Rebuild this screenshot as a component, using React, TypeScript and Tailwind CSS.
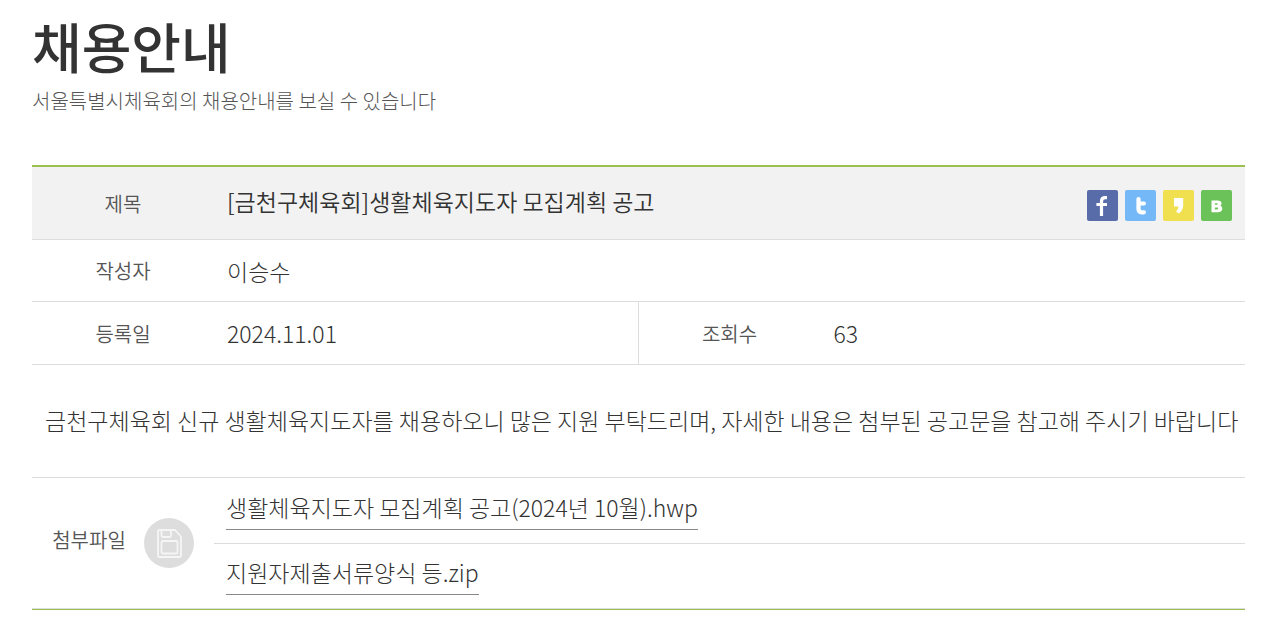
import type { ReactNode } from 'react';

const demiLight = "font-['Noto_Sans_CJK_KR_DemiLight','Noto_Sans_CJK_KR',sans-serif]";

const files = ['생활체육지도자 모집계획 공고(2024년 10월).hwp', '지원자제출서류양식 등.zip'];

const shares: { name: string; className: string; icon: ReactNode }[] = [
  {
    name: '페이스북',
    className: 'bg-[#576ca8]',
    icon: <path d="M20 7.600h-1.800c-2.600 0-3.700 1.400-3.700 3.800v14.700M9.400 14.500h10.600" fill="none" stroke="#fff" strokeWidth="3.200" />,
  },
  {
    name: '트위터',
    className: 'bg-[#74b8f7]',
    icon: (
      <path d="M13.500 9v9.800c0 2.600 1.400 3.500 3.400 3.500h2M13.500 13.500h5.400" fill="none" stroke="#fff" strokeWidth="4.200" strokeLinecap="round" />
    ),
  },
  {
    name: '카카오스토리',
    className: 'bg-[#f0df4e]',
    icon: <path d="M11 8h9.200v7.200c0 3.600-1.800 6.400-4.400 8.200l-2.800-1.900c1.500-1.500 2.300-3 2.500-5H11z" fill="#fff" />,
  },
  {
    name: '블로그',
    className: 'bg-[#6ac259]',
    icon: (
      <path
        fillRule="evenodd"
        d="M10.500 10.400h6c2.700 0 4 1.200 4 3.100 0 1.100-.5 1.900-1.300 2.300 1.300.5 2.100 1.500 2.100 2.900 0 2.200-1.700 3.600-4.400 3.600h-6.400zM13.900 13.200v1.600h1.900c1.300 0 1.300-1.600 0-1.600zM13.900 17.500v1.900h2.200c1.500 0 1.500-1.900 0-1.900z"
        fill="#fff"
      />
    ),
  },
];

function Label({ children }: { children: ReactNode }) {
  return (
    <th scope="row" className={`border-b border-[#ddd] text-xl font-normal text-[#555] ${demiLight}`}>
      {children}
    </th>
  );
}

export default function App() {
  return (
    <main className="bg-white pt-2.5 pr-[35px] pb-4 pl-8 font-['Noto_Sans_CJK_KR',sans-serif] font-light text-[#333]">
      <h1 className="text-[54px] leading-[72px] font-medium">채용안내</h1>
      <p className="mt-[5px] text-xl leading-7 text-[#555]">서울특별시체육회의 채용안내를 보실 수 있습니다</p>

      <table className="mt-[50px] w-full table-fixed border-separate border-spacing-0 border-t-2 border-b border-t-[#9bc251] border-b-[#9bc251] text-[23px] leading-8">
        <colgroup>
          <col className="w-[182px]" />
          <col />
          <col className="w-[182px]" />
          <col />
        </colgroup>
        <tbody>
          <tr className="h-[73px] bg-[#f2f2f2]">
            <Label>
              <span className="block pt-0.5">제목</span>
            </Label>
            <td colSpan={3} className="border-b border-[#ddd] px-[13px]">
              <div className="flex items-center justify-between">
                <h2 className={`pb-1 font-normal ${demiLight}`}>[금천구체육회]생활체육지도자 모집계획 공고</h2>
                <div className="flex gap-[7px] pt-1">
                  {shares.map((s) => (
                    <button key={s.name} type="button" aria-label={s.name} className={`size-[31px] rounded-xs ${s.className}`}>
                      <svg viewBox="0 0 31 31" className="size-full" aria-hidden="true">
                        {s.icon}
                      </svg>
                    </button>
                  ))}
                </div>
              </div>
            </td>
          </tr>
          <tr className="h-[62px]">
            <Label>작성자</Label>
            <td colSpan={3} className="border-b border-[#ddd] px-[13px]">
              이승수
            </td>
          </tr>
          <tr className="h-[63px]">
            <Label>
              <span className="block pt-0.5">등록일</span>
            </Label>
            <td className="border-r border-b border-[#ddd] px-[13px]">2024.11.01</td>
            <Label>
              <span className="block pt-0.5">조회수</span>
            </Label>
            <td className="border-b border-[#ddd] px-[13px]">63</td>
          </tr>
          <tr className="h-[113px]">
            <td colSpan={4} className="border-b border-[#ddd] pb-0.5 pl-[13px]">
              금천구체육회 신규 생활체육지도자를 채용하오니 많은 지원 부탁드리며, 자세한 내용은 첨부된 공고문을 참고해 주시기 바랍니다
            </td>
          </tr>
          <tr>
            <Label>
              <div className="flex items-center justify-center gap-[18px]">
                <span className="pb-1.5">첨부파일</span>
                <svg viewBox="0 0 50 50" className="size-[50px]" aria-hidden="true">
                  <circle cx="25" cy="25" r="25" fill="#ddd" />
                  <g fill="none" stroke="#f5f5f5" strokeWidth="1.800" strokeLinejoin="round">
                    <path d="M15.500 12h15.500l6 6.500v19a1.500 1.500 0 0 1-1.500 1.500h-20a1.500 1.500 0 0 1-1.500-1.500v-24a1.500 1.500 0 0 1 1.500-1.500z" />
                    <path d="M17.500 12v5.500a1.500 1.500 0 0 0 1.500 1.500h6.500a1.500 1.500 0 0 0 1.500-1.500V12" />
                    <rect x="17.500" y="23" width="16" height="12.500" rx="1.500" />
                  </g>
                </svg>
              </div>
            </Label>
            <td colSpan={3} className="border-b border-[#ddd] pt-px">
              <ul>
                {files.map((f) => (
                  <li key={f} className="border-b border-[#ddd] px-3 pt-3 pb-[13px] last:border-b-0">
                    <a href="#" className="block w-fit border-b border-[#888] pb-1.5">
                      {f}
                    </a>
                  </li>
                ))}
              </ul>
            </td>
          </tr>
        </tbody>
      </table>
    </main>
  );
}
